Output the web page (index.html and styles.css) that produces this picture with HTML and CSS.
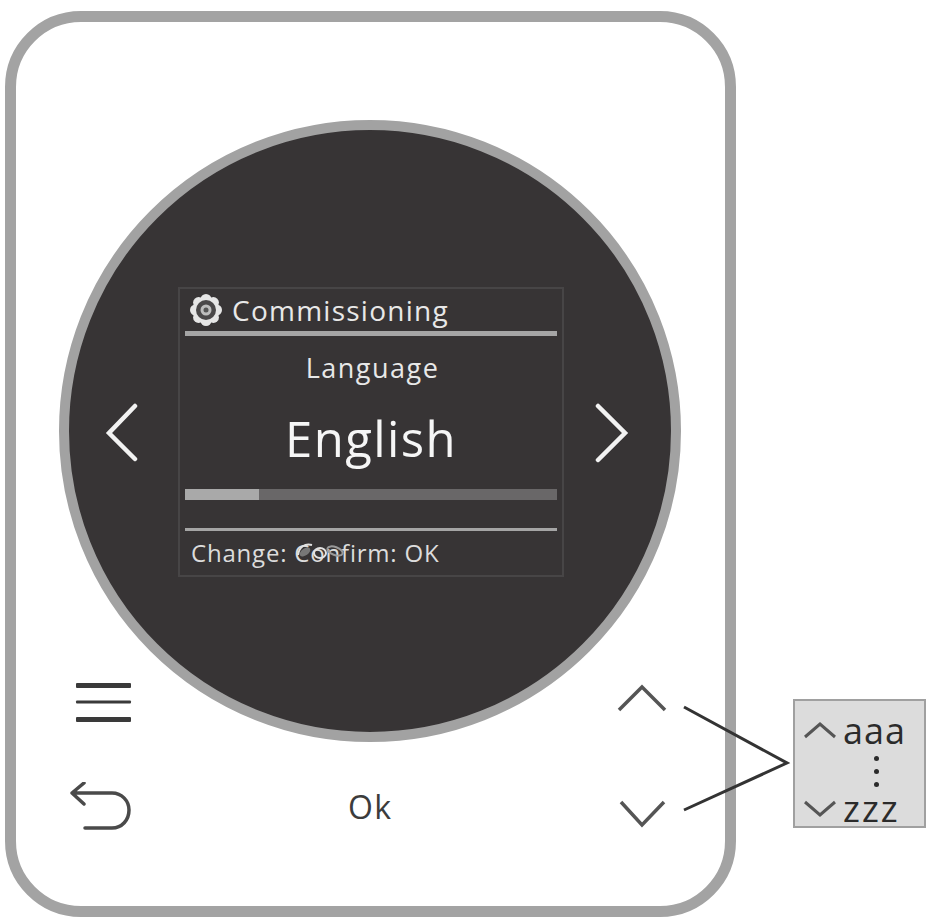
FILE: index.html
```html
<!DOCTYPE html>
<html lang="en">

<head>
    <meta charset="UTF-8">
    <title>Commissioning - Language</title>
    <link rel="stylesheet" href="styles.css">
</head>

<body>
    <div class="canvas">
        <div class="device"></div>

        <div class="dial">
            <svg class="arrow" width="36" height="60" viewBox="0 0 36 60">
                <path d="M33 3 L7 30 L33 56" />
            </svg>
            <div class="screen">
                <div class="screenHead">
                    <svg class="gear" width="34" height="34" viewBox="0 0 34 34">
                        <g fill="#e6e6e6">
                            <circle cx="17" cy="17" r="12.5" />
                            <circle cx="17" cy="6.500" r="5.500" />
                            <circle cx="17" cy="27.500" r="5.500" />
                            <circle cx="6.500" cy="17" r="5.500" />
                            <circle cx="27.500" cy="17" r="5.500" />
                            <circle cx="9.600" cy="9.600" r="5.500" />
                            <circle cx="24.400" cy="9.600" r="5.500" />
                            <circle cx="9.600" cy="24.400" r="5.500" />
                            <circle cx="24.400" cy="24.400" r="5.500" />
                        </g>
                        <circle cx="17" cy="17" r="10" fill="#4a4849" />
                        <circle cx="17" cy="17" r="5.500" fill="#bdbdbd" />
                        <circle cx="17" cy="17" r="2.500" fill="#555" />
                    </svg>
                    <span>Commissioning</span>
                </div>
                <div class="rule thick"></div>
                <div class="screenBody">
                    <div class="label">Language</div>
                    <div class="value">English</div>
                </div>
                <div class="progress">
                    <div class="progressFill"></div>
                </div>
                <div class="rule thin"></div>
                <div class="screenFoot">
                    Change: Confirm: OK
                    <svg class="ghost" width="52" height="22" viewBox="0 0 52 22">
                        <ellipse class="smudge" cx="10" cy="11" rx="6" ry="3.500" transform="rotate(-35 10 11)" />
                        <path class="swirl" d="M3 14 C4 6 10 2 17 4" />
                        <ellipse class="swirl" cx="25" cy="12" rx="6" ry="5" />
                        <ellipse class="smear" cx="40" cy="10" rx="8" ry="4" transform="rotate(20 40 10)" />
                    </svg>
                </div>
            </div>
            <svg class="arrow arrowNext" width="44" height="60" viewBox="0 0 44 60">
                <path d="M4 3 L31 30 L4 57" />
            </svg>
        </div>

        <svg class="menuIcon" width="58" height="42" viewBox="0 0 58 42">
            <rect x="1" y="2" width="55" height="5" rx="1" />
            <rect x="1" y="19.500" width="55" height="3" rx="1" />
            <rect x="1" y="36" width="55" height="5" rx="1" />
        </svg>

        <svg class="backIcon" width="64" height="50" viewBox="0 0 64 50">
            <path d="M14 1 L2 11 L14 22 M2 11 H42 C52 11 59 19 59 28 C59 38 52 46 42 46 H15" />
        </svg>

        <div class="okLabel">Ok</div>

        <svg class="lines" width="929" height="921" viewBox="0 0 929 921">
            <path class="chev" d="M619 710 L642 687 L665 710" />
            <path class="chev" d="M621 802 L642 825 L664 802" />
            <path class="lead" d="M684 707 L787 763 L684 810" />
        </svg>

        <div class="legend">
            <div class="legendRow">
                <svg width="32" height="18" viewBox="0 0 32 18"><path d="M1 15 L16 2 L31 15" /></svg>
                <span class="aaa">aaa</span>
            </div>
            <div class="legendDots">
                <i></i><i></i><i></i>
            </div>
            <div class="legendRow">
                <svg width="32" height="18" viewBox="0 0 32 18"><path d="M1 2 L16 15 L31 2" /></svg>
                <span class="zzz">zzz</span>
            </div>
        </div>
    </div>
</body>

</html>
```

FILE: styles.css
```css
* {
    padding: 0;
    margin: 0;
    box-sizing: border-box;
}

body {
    background-color: #fff;
    font-family: "Open Sans", "Noto Sans", sans-serif;
    overflow: hidden;
}

.canvas {
    width: 929px;
    height: 921px;
    position: relative;
}

.device {
    position: absolute;
    left: 5px;
    top: 11px;
    width: 731px;
    height: 906px;
    border: 11px solid #a3a3a3;
    border-radius: 76px;
}

.dial {
    position: absolute;
    left: 59px;
    top: 120px;
    width: 622px;
    height: 622px;
    border: 10px solid #a2a2a2;
    border-radius: 50%;
    background-color: #373435;
    display: flex;
    align-items: center;
    justify-content: center;
    gap: 40px;
}

.arrow {
    margin-top: 3px;
    flex: none;
}

.arrowNext {
    margin-left: -10px;
}

.arrow path {
    fill: none;
    stroke: #f2f2f2;
    stroke-width: 4.5;
    stroke-linecap: round;
}

.screen {
    width: 386px;
    height: 290px;
    border: 2px solid #474546;
    padding: 0 5px;
    display: flex;
    flex-direction: column;
    flex: none;
    margin-top: 2px;
    color: #e8e8e8;
}

.screenHead {
    height: 42px;
    display: flex;
    align-items: center;
    gap: 9px;
    padding-left: 4px;
    font-size: 28px;
    letter-spacing: 1.25px;
}

.rule {
    background-color: #a5a5a5;
    flex: none;
}

.rule.thick {
    height: 5px;
}

.rule.thin {
    height: 3px;
    margin-top: 28px;
}

.screenBody {
    height: 153px;
    text-align: center;
}

.label {
    font-size: 27px;
    line-height: 36px;
    margin-top: 14px;
    padding-left: 3px;
    letter-spacing: 1.5px;
}

.value {
    font-size: 49px;
    line-height: 66px;
    margin-top: 19px;
    color: #f6f6f6;
    letter-spacing: 1.4px;
}

.progress {
    height: 11px;
    background-color: #696768;
    flex: none;
}

.progressFill {
    width: 74px;
    height: 100%;
    background-color: #a9a9a9;
}

.screenFoot {
    flex: 1;
    position: relative;
    padding-left: 6px;
    font-size: 24px;
    line-height: 43px;
    letter-spacing: 0.8px;
    color: #dcdcdc;
}

.ghost {
    position: absolute;
    left: 110px;
    top: 10px;
}

.smudge {
    fill: #777;
}

.swirl {
    fill: none;
    stroke: #e2e2e2;
    stroke-width: 2;
}

.smear {
    fill: none;
    stroke: #9a9a9a;
    stroke-width: 2;
}

.menuIcon {
    position: absolute;
    left: 75px;
    top: 681px;
    fill: #3a3a3a;
}

.backIcon {
    position: absolute;
    left: 70px;
    top: 782px;
}

.backIcon path {
    fill: none;
    stroke: #4a4a4a;
    stroke-width: 3.5;
    stroke-linecap: round;
    stroke-linejoin: round;
}

.okLabel {
    position: absolute;
    left: 348px;
    top: 787px;
    font-size: 32px;
    line-height: 40px;
    letter-spacing: 1.3px;
    color: #3c3c3c;
}

.lines {
    position: absolute;
    left: 0;
    top: 0;
}

.lines path {
    fill: none;
}

.chev {
    stroke: #555;
    stroke-width: 3.5;
}

.lead {
    stroke: #333;
    stroke-width: 3;
}

.legend {
    position: absolute;
    left: 793px;
    top: 699px;
    width: 133px;
    height: 129px;
    background-color: #dcdcdc;
    border: 2px solid #a0a0a0;
    padding: 9px 0 0 9px;
    color: #2b2b2b;
}

.legendRow {
    display: flex;
    align-items: center;
    gap: 7px;
    height: 42px;
    font-size: 36px;
    line-height: 42px;
}

.aaa {
    letter-spacing: 1px;
}

.zzz {
    letter-spacing: 2px;
}

.legendDots {
    height: 36px;
    display: flex;
    flex-direction: column;
    align-items: center;
    justify-content: center;
    gap: 8px;
    padding-left: 25px;
    padding-top: 3px;
}

.legendDots i {
    width: 5px;
    height: 5px;
    border-radius: 50%;
    background-color: #2b2b2b;
}

.legendRow svg {
    flex: none;
    fill: none;
    stroke: #555;
    stroke-width: 3;
}
```
